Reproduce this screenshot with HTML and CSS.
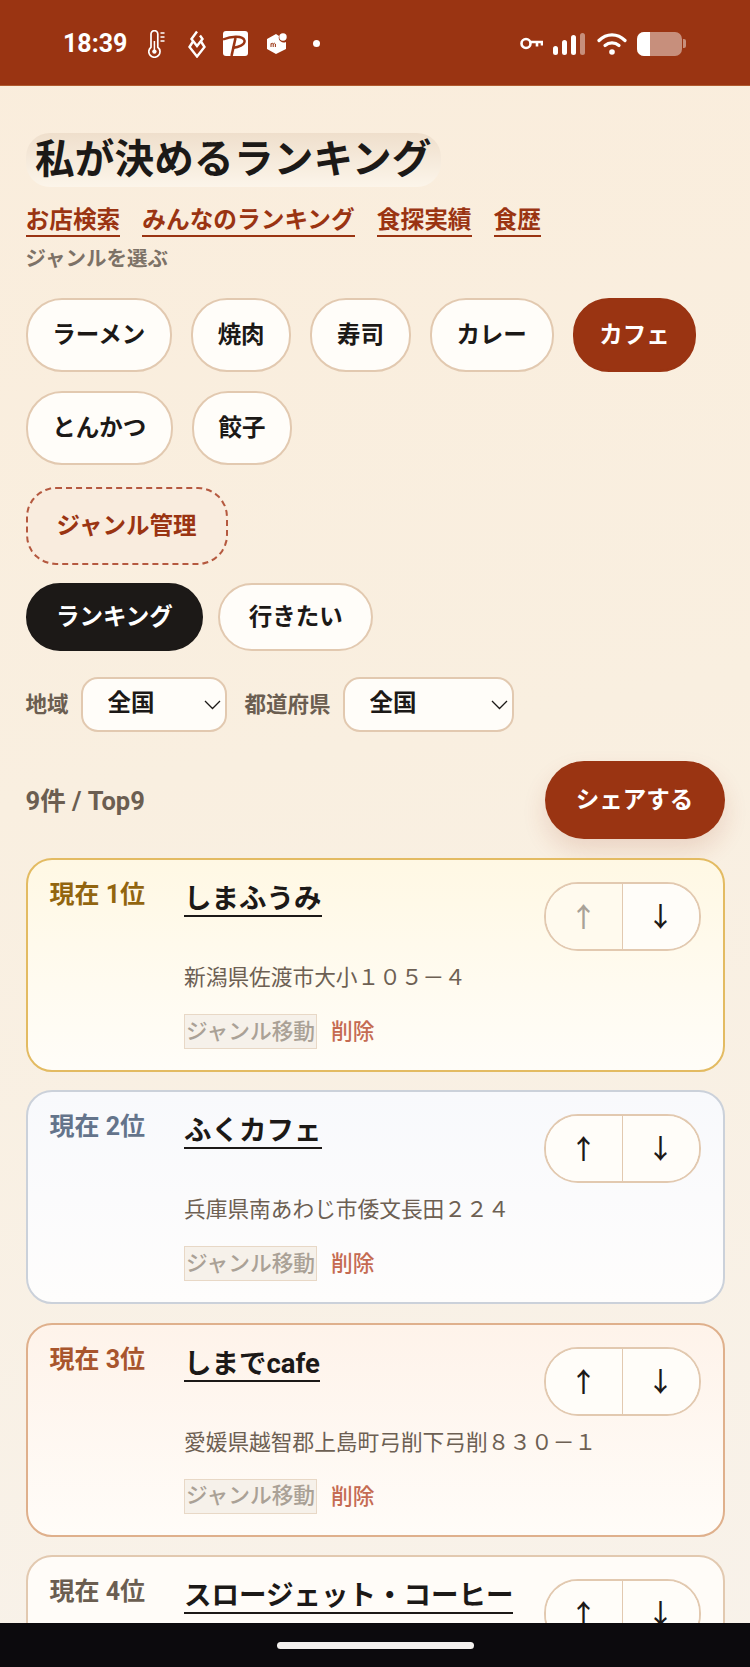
FILE: index.html
```html
<!DOCTYPE html>
<html lang="ja">
<head>
    <meta charset="UTF-8">
    <meta name="viewport" content="width=device-width, initial-scale=1.0">
    <title>私が決めるランキング</title>
    <link rel="stylesheet" href="styles.css">
</head>
<body>
    <div class="status-bar">
        <div class="status-left">
            <span class="clock">18:39</span>
            <svg class="icon-thermo" width="17" height="28" viewBox="0 0 17 28" fill="none" stroke="#fff" stroke-width="1.7">
                <path d="M3 4a3.4 3.4 0 0 1 6.8 0v13.2a5.6 5.6 0 1 1-6.8 0z"/>
                <circle cx="6.4" cy="21.6" r="2.2" fill="#fff" stroke="none"/>
                <path d="M6.4 11v9" stroke-width="1.5"/>
                <path d="M12.5 3h4M12.5 7h4M12.5 11h4" stroke-width="1.4"/>
            </svg>
            <svg class="icon-gem" width="18" height="28" viewBox="0 0 18 28" fill="none" stroke="#fff" stroke-width="2.400">
                <path d="M9 1.5L3.500 9 9 16l5.500-7-2.500-3.500"/>
                <path d="M5 11.500L1.500 17 9 26.500 16.500 17 13 11.500"/>
            </svg>
            <svg class="icon-pay" width="25" height="25" viewBox="0 0 25 25">
                <rect width="25" height="25" rx="3" fill="#fff"/>
                <path d="M0 8.500C8 5 20 4.500 21.500 9.500 22.500 14 15 16 9.500 17" fill="none" stroke="#9a3412" stroke-width="2.400"/>
                <path d="M12.500 7L8.500 25" fill="none" stroke="#9a3412" stroke-width="2.600"/>
            </svg>
            <svg class="icon-box" width="22" height="21" viewBox="0 0 22 21">
                <path d="M10 1L1 6v10l9 5 10-5V9a5 5 0 0 1-7-6z" fill="#fff"/>
                <circle cx="17" cy="4" r="3.700" fill="#fff"/>
                <path d="M5 14v-3.500M5 11q1.500-1.500 2.200 0v3M7.200 11q1.500-1.500 2.200 0v3" fill="none" stroke="#9a3412" stroke-width="1"/>
            </svg>
            <span class="status-dot"></span>
        </div>
        <div class="status-right">
            <svg class="icon-key" width="23" height="13" viewBox="0 0 23 13" fill="none" stroke="#fff" stroke-width="2.600">
                <circle cx="6" cy="6.500" r="4.500"/>
                <path d="M10.500 5H22V8.500M17 5V9.500"/>
            </svg>
            <div class="signal">
                <i class="bar-1"></i>
                <i class="bar-2"></i>
                <i class="bar-3"></i>
                <i class="bar-4"></i>
            </div>
            <svg class="icon-wifi" width="30" height="23" viewBox="0 0 30 23" fill="none" stroke="#fff" stroke-width="3.200" stroke-linecap="round">
                <path d="M2 8.500C9.500 1 20.500 1 28 8.500"/>
                <path d="M8 13.500c4-3.500 10-3.500 14 0"/>
                <circle cx="15" cy="20" r="2.800" fill="#fff" stroke="none"/>
            </svg>
            <div class="battery">
                <div class="battery-body"><div class="battery-fill"></div></div>
                <div class="battery-tip"></div>
            </div>
        </div>
    </div>

    <main class="page">
        <h1 class="page-title">私が決めるランキング</h1>

        <nav class="top-links">
            <a href="#">お店検索</a>
            <a href="#">みんなのランキング</a>
            <a href="#">食探実績</a>
            <a href="#">食歴</a>
        </nav>

        <p class="section-label">ジャンルを選ぶ</p>

        <div class="genre-list">
            <button class="chip">ラーメン</button>
            <button class="chip">焼肉</button>
            <button class="chip">寿司</button>
            <button class="chip">カレー</button>
            <button class="chip chip-active">カフェ</button>
            <button class="chip">とんかつ</button>
            <button class="chip">餃子</button>
        </div>

        <button class="manage-btn">ジャンル管理</button>

        <div class="tabs">
            <button class="tab tab-active">ランキング</button>
            <button class="tab">行きたい</button>
        </div>

        <div class="filters">
            <label class="filter-label" for="area">地域</label>
            <div class="select-wrap area-select">
                <select id="area"><option>全国</option></select>
                <svg class="chevron" width="17" height="10" viewBox="0 0 17 10" fill="none" stroke="#1c1917" stroke-width="1.300"><path d="M1 1l7.500 7.500L16 1"/></svg>
            </div>
            <label class="filter-label pref-label" for="pref">都道府県</label>
            <div class="select-wrap pref-select">
                <select id="pref"><option>全国</option></select>
                <svg class="chevron" width="17" height="10" viewBox="0 0 17 10" fill="none" stroke="#1c1917" stroke-width="1.300"><path d="M1 1l7.500 7.500L16 1"/></svg>
            </div>
        </div>

        <div class="result-row">
            <span class="result-count">9件 / Top9</span>
            <button class="share-btn">シェアする</button>
        </div>

        <ul class="rank-list">
            <li class="card card-gold">
                <div class="rank">現在 1位</div>
                <div class="card-body">
                    <div class="card-top">
                        <a class="shop-name" href="#">しまふうみ</a>
                        <div class="move-btns">
                            <button class="move-btn" disabled>↑</button>
                            <button class="move-btn">↓</button>
                        </div>
                    </div>
                    <p class="address">新潟県佐渡市大小１０５－４</p>
                    <div class="card-actions">
                        <button class="move-genre" disabled>ジャンル移動</button>
                        <button class="delete-btn">削除</button>
                    </div>
                </div>
            </li>
            <li class="card card-silver">
                <div class="rank">現在 2位</div>
                <div class="card-body">
                    <div class="card-top">
                        <a class="shop-name" href="#">ふくカフェ</a>
                        <div class="move-btns">
                            <button class="move-btn">↑</button>
                            <button class="move-btn">↓</button>
                        </div>
                    </div>
                    <p class="address">兵庫県南あわじ市倭文長田２２４</p>
                    <div class="card-actions">
                        <button class="move-genre" disabled>ジャンル移動</button>
                        <button class="delete-btn">削除</button>
                    </div>
                </div>
            </li>
            <li class="card card-bronze">
                <div class="rank">現在 3位</div>
                <div class="card-body">
                    <div class="card-top">
                        <a class="shop-name" href="#">しまでcafe</a>
                        <div class="move-btns">
                            <button class="move-btn">↑</button>
                            <button class="move-btn">↓</button>
                        </div>
                    </div>
                    <p class="address">愛媛県越智郡上島町弓削下弓削８３０－１</p>
                    <div class="card-actions">
                        <button class="move-genre" disabled>ジャンル移動</button>
                        <button class="delete-btn">削除</button>
                    </div>
                </div>
            </li>
            <li class="card">
                <div class="rank">現在 4位</div>
                <div class="card-body">
                    <div class="card-top">
                        <a class="shop-name" href="#">スロージェット・コーヒー</a>
                        <div class="move-btns">
                            <button class="move-btn">↑</button>
                            <button class="move-btn">↓</button>
                        </div>
                    </div>
                </div>
            </li>
        </ul>
    </main>

    <div class="nav-bar"><div class="home-pill"></div></div>
</body>
</html>
```

FILE: styles.css
```css
/* Reset and basic layout */
* {
    margin: 0;
    padding: 0;
    box-sizing: border-box;
}

body {
    font-family: Roboto, "Noto Sans CJK JP", sans-serif;
    width: 750px;
    height: 1667px;
    overflow: hidden;
    display: flex;
    flex-direction: column;
    background: linear-gradient(170deg, #faeddc 0%, #f9efe0 45%, #f8f2ea 100%);
    color: #1c1917;
}

button, select {
    font-family: inherit;
}

a {
    text-decoration: none;
}

/* Status bar */
.status-bar {
    flex: none;
    height: 86px;
    background-color: #9a3412;
    border-bottom: 1px solid #b05a2e;
    padding: 30px 64px 0;
    display: flex;
    justify-content: space-between;
    align-items: flex-start;
    color: white;
}

.status-left, .status-right {
    display: flex;
    align-items: center;
    height: 27px;
}

.clock {
    font-weight: 700;
    font-size: 25px;
    line-height: 27px;
    margin-left: -1px;
}

.icon-thermo { margin-left: 21px; }
.icon-gem { margin-left: 23px; }
.icon-pay { margin-left: 17px; }
.icon-box { margin-left: 18px; }

.status-dot {
    width: 7px;
    height: 7px;
    border-radius: 50%;
    background-color: white;
    margin-left: 25px;
}

.signal {
    display: flex;
    align-items: flex-end;
    gap: 4px;
    height: 22px;
    margin-left: 10px;
}

.signal i {
    display: block;
    width: 5px;
    border-radius: 2.5px;
    background-color: white;
}

.bar-1 { height: 9px; }
.bar-2 { height: 15px; }
.bar-3 { height: 20px; }
.signal .bar-4 { height: 22px; background-color: rgba(255, 255, 255, 0.45); }

.icon-wifi { margin-left: 12px; }

.battery {
    display: flex;
    align-items: center;
    margin-left: 10px;
}

.battery-body {
    width: 45px;
    height: 24px;
    border-radius: 7px;
    overflow: hidden;
    background-color: rgba(255, 255, 255, 0.45);
}

.battery-fill {
    width: 13px;
    height: 100%;
    background-color: white;
}

.battery-tip {
    width: 3px;
    height: 9px;
    margin-left: 1px;
    border-radius: 0 2px 2px 0;
    background-color: rgba(255, 255, 255, 0.45);
}

/* Page */
.page {
    flex: 1;
    min-height: 0;
    overflow: hidden;
    padding: 47px 25.500px 0;
}

.page-title {
    display: inline-block;
    font-size: 39.600px;
    font-weight: 700;
    line-height: 54px;
    letter-spacing: 0.2px;
    padding: 0 9.500px 4px;
    height: 54px;
    border-radius: 24px;
    background: linear-gradient(to bottom, #efdfcc, #fcf5ea);
}

.top-links {
    display: flex;
    gap: 22px;
    margin-top: 18px;
}

.top-links a {
    font-size: 23.700px;
    font-weight: 700;
    line-height: 30px;
    color: #9a3412;
    border-bottom: 2px solid #9a3412;
}

.section-label {
    font-size: 20.500px;
    font-weight: 700;
    line-height: 28px;
    margin-top: 8px;
    margin-bottom: 2px;
    color: #7d7267;
}

.genre-list {
    display: flex;
    flex-wrap: wrap;
    gap: 19px;
    margin-top: 25px;
}

.chip {
    height: 74px;
    padding: 0 24.700px 5px;
    font-size: 23.500px;
    font-weight: 700;
    color: #1c1917;
    background-color: #fffdf9;
    border: 2px solid #e2c9b0;
    border-radius: 36px;
}

.chip-active {
    background-color: #9a3412;
    border-color: #9a3412;
    color: white;
}

.manage-btn {
    display: block;
    height: 78px;
    width: 202px;
    margin-top: 22px;
    padding-bottom: 5px;
    font-size: 23.500px;
    font-weight: 700;
    color: #9a3412;
    background-color: #f9ecde;
    border: 2px dashed #b5593f;
    border-radius: 30px;
}

.tabs {
    display: flex;
    gap: 15px;
    margin-top: 18px;
}

.tab {
    height: 68px;
    padding: 0 28.500px 5px;
    font-size: 23.500px;
    font-weight: 700;
    color: #1c1917;
    background-color: #fffdf9;
    border: 2px solid #e2c9b0;
    border-radius: 34px;
}

.tab-active {
    background-color: #1c1917;
    border-color: #1c1917;
    color: white;
}

.filters {
    display: flex;
    align-items: center;
    margin-top: 26px;
}

.filter-label {
    font-size: 21.500px;
    font-weight: 700;
    color: #6b5e51;
    padding-bottom: 4px;
}

.pref-label {
    margin-left: 18px;
}

.select-wrap {
    position: relative;
    height: 55px;
    margin-left: 12px;
}

.area-select { width: 146px; }
.pref-select { width: 171px; }

.select-wrap select {
    appearance: none;
    width: 100%;
    height: 100%;
    padding: 0 0 3px 25px;
    font-size: 23.500px;
    font-weight: 700;
    color: #1c1917;
    background-color: #fffdf9;
    border: 2px solid #e2c9b0;
    border-radius: 17px;
}

.chevron {
    position: absolute;
    right: 6px;
    top: 23px;
}

.result-row {
    display: flex;
    justify-content: space-between;
    align-items: center;
    margin-top: 29px;
}

.result-count {
    font-size: 25.500px;
    font-weight: 700;
    color: #6b5e51;
    padding-bottom: 4px;
}

.share-btn {
    width: 180px;
    height: 78px;
    padding-bottom: 4px;
    font-size: 23.500px;
    font-weight: 700;
    color: white;
    background-color: #9a3412;
    border: none;
    border-radius: 39px;
    box-shadow: 0 12px 24px rgba(154, 52, 18, 0.14);
}

/* Ranking cards */
.rank-list {
    list-style-type: none;
    display: flex;
    flex-direction: column;
    gap: 18.400px;
    margin-top: 19px;
}

.card {
    display: flex;
    padding: 22px 22px 21px;
    border: 2px solid #e2c9b0;
    border-radius: 26px;
    background-color: #fffcf8;
}

.card-gold {
    border-color: #e3bb62;
    background: linear-gradient(to bottom, #fff8e4, #fffdf8);
}

.card-gold .rank { color: #92650f; }

.card-silver {
    border-color: #cbd1da;
    background: linear-gradient(to bottom, #f8f9fc, #fefdfc);
}

.card-silver .rank { color: #64748b; }

.card-bronze {
    border-color: #dfb08c;
    background: linear-gradient(to bottom, #fef3ea, #fffcf8);
}

.card-bronze .rank { color: #a8552d; }

.rank {
    flex: none;
    width: 134.500px;
    font-size: 25px;
    font-weight: 700;
    line-height: 26px;
    color: #6b5e51;
}

.card-body {
    flex: 1;
    min-width: 0;
}

.card-top {
    display: flex;
    justify-content: space-between;
    align-items: flex-start;
}

.shop-name {
    font-size: 27.500px;
    font-weight: 700;
    line-height: 33px;
    color: #1c1917;
    border-bottom: 2px solid #1c1917;
}

.move-btns {
    flex: none;
    display: flex;
    width: 157px;
    height: 69px;
    overflow: hidden;
    background-color: #fffdf9;
    border: 2px solid #e2c9b0;
    border-radius: 34px;
}

.move-btn {
    flex: 1;
    padding-bottom: 2px;
    font-size: 27px;
    font-weight: 500;
    color: #1c1917;
    background-color: #fffdf9;
    border: none;
}

.move-btn:first-child {
    border-right: 1px solid #e2c9b0;
}

.move-btn:disabled {
    color: #a9a297;
    background-color: #fffaee;
}

.address {
    margin-top: 10px;
    font-size: 21.700px;
    line-height: 33px;
    color: #6d6053;
}

.card-actions {
    display: flex;
    align-items: center;
    gap: 14px;
    margin-top: 20px;
}

.move-genre {
    width: 133px;
    height: 35px;
    font-size: 21.700px;
    font-weight: 500;
    line-height: 1;
    color: #aaa196;
    background-color: #f6f1ea;
    border: 1.500px solid #e8d8c6;
}

.delete-btn {
    padding-bottom: 4px;
    font-size: 21.700px;
    font-weight: 500;
    color: #c56b52;
    background: none;
    border: none;
}

/* Android nav bar */
.nav-bar {
    flex: none;
    height: 44px;
    padding-top: 19px;
    background-color: #0c0a0d;
    display: flex;
    justify-content: center;
}

.home-pill {
    width: 197px;
    height: 7px;
    border-radius: 4px;
    background-color: #f4f1ee;
}
```
